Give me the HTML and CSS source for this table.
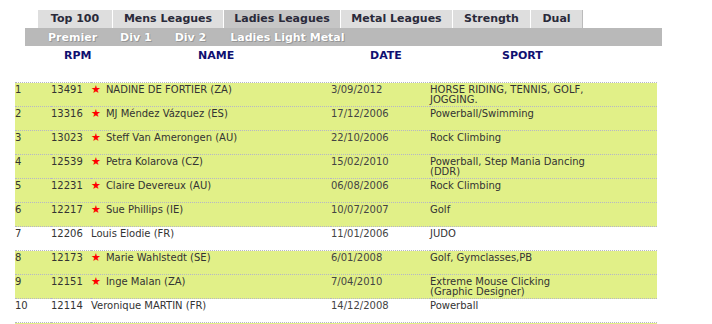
FILE: index.html
```html
<!DOCTYPE html>
<html>
<head>
<meta charset="utf-8">
<link rel="stylesheet" href="styles.css">
</head>
<body>
<div class="page">
  <ul class="tabs">
    <li class="tab t1">Top 100</li>
    <li class="tab t2">Mens Leagues</li>
    <li class="tab t3 active">Ladies Leagues</li>
    <li class="tab t4">Metal Leagues</li>
    <li class="tab t5">Strength</li>
    <li class="tab t6">Dual</li>
  </ul>
  <div class="subnav">
    <span class="sub s1">Premier</span>
    <span class="sub s2">Div 1</span>
    <span class="sub s3">Div 2</span>
    <span class="sub s4">Ladies Light Metal</span>
  </div>
  <div class="heads">
    <span class="h h-rpm">RPM</span>
    <span class="h h-name">NAME</span>
    <span class="h h-date">DATE</span>
    <span class="h h-sport">SPORT</span>
  </div>
  <table class="list">
    <colgroup>
      <col class="c-rank"><col class="c-rpm"><col class="c-name"><col class="c-date"><col class="c-sport">
    </colgroup>
    <tr class="hl"><td>1</td><td>13491</td><td><span class="star">★</span>NADINE DE FORTIER (ZA)</td><td class="d">3/09/2012</td><td>HORSE RIDING, TENNIS, GOLF,<br>JOGGING.</td></tr>
    <tr class="hl"><td>2</td><td>13316</td><td><span class="star">★</span>MJ Méndez Vázquez (ES)</td><td class="d">17/12/2006</td><td>Powerball/Swimming</td></tr>
    <tr class="hl"><td>3</td><td>13023</td><td><span class="star">★</span>Steff Van Amerongen (AU)</td><td class="d">22/10/2006</td><td>Rock Climbing</td></tr>
    <tr class="hl"><td>4</td><td>12539</td><td><span class="star">★</span>Petra Kolarova (CZ)</td><td class="d">15/02/2010</td><td>Powerball, Step Mania Dancing<br>(DDR)</td></tr>
    <tr class="hl"><td>5</td><td>12231</td><td><span class="star">★</span>Claire Devereux (AU)</td><td class="d">06/08/2006</td><td>Rock Climbing</td></tr>
    <tr class="hl"><td>6</td><td>12217</td><td><span class="star">★</span>Sue Phillips (IE)</td><td class="d">10/07/2007</td><td>Golf</td></tr>
    <tr><td>7</td><td>12206</td><td>Louis Elodie (FR)</td><td class="d">11/01/2006</td><td>JUDO</td></tr>
    <tr class="hl"><td>8</td><td>12173</td><td><span class="star">★</span>Marie Wahlstedt (SE)</td><td class="d">6/01/2008</td><td>Golf, Gymclasses,PB</td></tr>
    <tr class="hl"><td>9</td><td>12151</td><td><span class="star">★</span>Inge Malan (ZA)</td><td class="d">7/04/2010</td><td>Extreme Mouse Clicking<br>(Graphic Designer)</td></tr>
    <tr><td>10</td><td>12114</td><td>Veronique MARTIN (FR)</td><td class="d">14/12/2008</td><td>Powerball</td></tr>
    <tr class="hl"><td>&nbsp;</td><td></td><td></td><td></td><td></td></tr>
  </table>
</div>
</body>
</html>
```

FILE: styles.css
```css
html, body {
  margin: 0;
  padding: 0;
  background: #ffffff;
}
.page {
  font-family: "DejaVu Sans", Verdana, sans-serif;
  font-size: 10px;
  color: #333333;
}
.tabs {
  list-style: none;
  margin: 0;
  padding: 10px 0 0 38px;
  display: flex;
  height: 18px;
}
.tab {
  background: #dedede;
  font-family: "DejaVu Sans", Tahoma, sans-serif;
  font-weight: bold;
  font-size: 11px;
  color: #2a2a3a;
  height: 18px;
  line-height: 18px;
  text-align: center;
  border-right: 1px solid #ffffff;
  box-sizing: border-box;
}
.tab.active {
  background: #c6c6c6;
  border-right: 1px solid #ffffff;
}
.t1 { width: 75px; }
.t2 { width: 111px; }
.t3 { width: 117px; }
.t4 { width: 112px; }
.t5 { width: 78px; }
.t6 { width: 52px; border-right: 1px solid #bbbbbb; }
.subnav {
  margin-left: 25px;
  width: 637px;
  height: 18px;
  background: #b9b9b9;
  display: flex;
  align-items: center;
  font-weight: bold;
  font-size: 11px;
  color: #ffffff;
  text-shadow: 0 0 1px #8a8a8a, 1px 1px 0 #9a9a9a;
}
.s1 { margin-left: 23px; }
.s2 { margin-left: 23px; }
.s3 { margin-left: 23px; }
.s4 { margin-left: 24px; }
.heads {
  position: relative;
  height: 36px;
  font-weight: bold;
  font-size: 11px;
  color: #101070;
}
.h {
  position: absolute;
  top: 3px;
}
.h-rpm { left: 64px; }
.h-name { left: 198px; }
.h-date { left: 370px; }
.h-sport { left: 502px; }
.list {
  margin-left: 15px;
  border-collapse: collapse;
  table-layout: fixed;
  width: 642px;
}
.c-rank { width: 36px; }
.c-rpm { width: 40px; }
.c-name { width: 240px; }
.c-date { width: 99px; }
.c-sport { width: 227px; }
.list td {
  height: 24px;
  padding: 2px 0 0 0;
  box-sizing: border-box;
  vertical-align: top;
  line-height: 10px;
  border-top: 1px dotted #b6b6c6;
  white-space: nowrap;
}
.list tr.hl td {
  background: #e1f088;
}
.list td.d {
  color: #444444;
}
.star {
  color: #ff0000;
  font-size: 11px;
  margin-right: 5px;
}
```
